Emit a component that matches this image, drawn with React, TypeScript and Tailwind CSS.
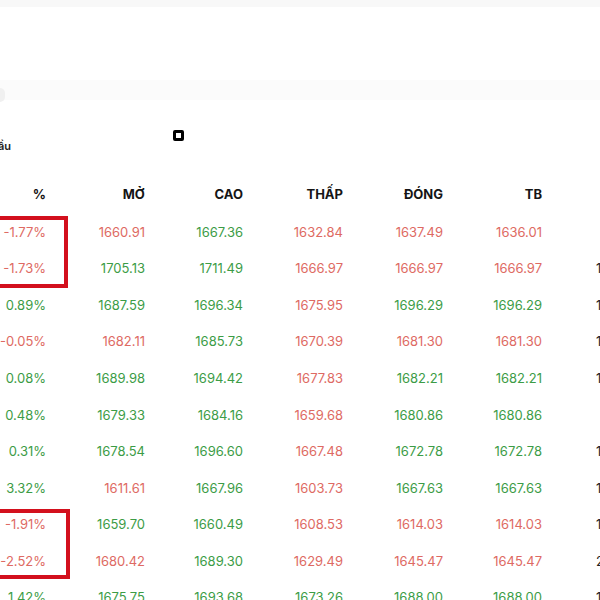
import React from "react";

type Row = { pct: string; vals: string[]; last: string };

const UP = "text-[#3c9c46]";
const DOWN = "text-[#de6a63]";

const rows: Row[] = [
  { pct: "-1.77%", vals: ["1660.91", "1667.36", "1632.84", "1637.49", "1636.01"], last: "" },
  { pct: "-1.73%", vals: ["1705.13", "1711.49", "1666.97", "1666.97", "1666.97"], last: "1" },
  { pct: "0.89%", vals: ["1687.59", "1696.34", "1675.95", "1696.29", "1696.29"], last: "1" },
  { pct: "-0.05%", vals: ["1682.11", "1685.73", "1670.39", "1681.30", "1681.30"], last: "1" },
  { pct: "0.08%", vals: ["1689.98", "1694.42", "1677.83", "1682.21", "1682.21"], last: "1" },
  { pct: "0.48%", vals: ["1679.33", "1684.16", "1659.68", "1680.86", "1680.86"], last: "" },
  { pct: "0.31%", vals: ["1678.54", "1696.60", "1667.48", "1672.78", "1672.78"], last: "1" },
  { pct: "3.32%", vals: ["1611.61", "1667.96", "1603.73", "1667.63", "1667.63"], last: "1" },
  { pct: "-1.91%", vals: ["1659.70", "1660.49", "1608.53", "1614.03", "1614.03"], last: "1" },
  { pct: "-2.52%", vals: ["1680.42", "1689.30", "1629.49", "1645.47", "1645.47"], last: "2" },
  { pct: "1.42%", vals: ["1675.75", "1693.68", "1673.26", "1688.00", "1688.00"], last: "1" },
];

// colour of each cell, taken from the screenshot
const colors: boolean[][] = [
  [false, false, true, false, false, false],
  [false, true, true, false, false, false],
  [true, true, true, false, true, true],
  [false, false, true, false, false, false],
  [true, true, true, false, true, true],
  [true, true, true, false, true, true],
  [true, true, true, false, true, true],
  [true, false, true, false, true, true],
  [false, true, true, false, false, false],
  [false, false, true, false, false, false],
  [true, true, true, true, true, true],
];

const headers = ["MỞ", "CAO", "THẤP", "ĐÓNG", "TB"];

const App = () => {
  return (
    <div
      className="w-[600px] h-[600px] overflow-hidden bg-white relative"
      style={{ fontFamily: "Inter, 'Noto Sans', sans-serif" }}
    >
      <div className="h-[176px] flex flex-col">
        <div className="h-[7px] bg-[#f8f8f8]" />
        <div className="h-[73px]" />
        <div className="h-[20px] bg-[#fbfbfb] flex items-center">
          <div className="w-[5px] h-[14px] rounded-r-full bg-[#f0f0f0] mt-[10px]" />
        </div>
        <div className="h-[30px]" />
        <div className="flex items-start h-[30px]">
          <p className="text-[11px] text-[#222] mt-[8px] ml-[-2px] font-semibold">ầu</p>
          <div className="ml-[162px] w-[11px] h-[11px] rounded-[2px] border-[3px] border-black bg-white" />
        </div>
      </div>

      <div className="w-[700px]">
        <div className="grid grid-cols-[46px_99px_98px_100px_100px_99px_100px] h-[38px] items-center text-[13px] font-bold text-[#151515]">
          <p className="text-right">%</p>
          {headers.map((h) => (
            <p key={h} className="text-right">{h}</p>
          ))}
          <p />
        </div>
        {rows.map((r, i) => (
          <div
            key={i}
            className="grid grid-cols-[46px_99px_98px_100px_100px_99px_100px] h-[36.6px] items-center text-[13px]"
          >
            <p className={`text-right whitespace-nowrap ${colors[i][0] ? UP : DOWN}`}>{r.pct}</p>
            {r.vals.map((v, j) => (
              <p key={j} className={`text-right ${colors[i][j + 1] ? UP : DOWN}`}>{v}</p>
            ))}
            <p className="pl-[54px] text-[#222] whitespace-nowrap">{r.last ? r.last + "2,450" : ""}</p>
          </div>
        ))}
      </div>

      <div className="absolute left-[-10px] top-[216px] w-[78px] h-[72px] border-[4px] border-[#d3101d]" />
      <div className="absolute left-[-10px] top-[509px] w-[80px] h-[70px] border-[4px] border-[#d3101d]" />
    </div>
  );
};

export default App;
